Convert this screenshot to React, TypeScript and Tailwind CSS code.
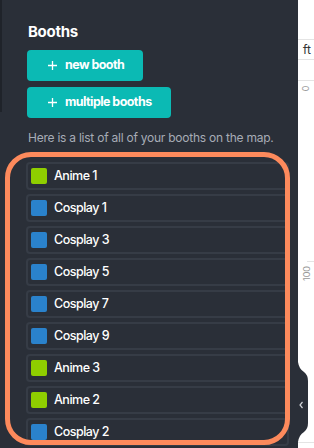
const booths = [
  { name: "Anime 1", color: "bg-[#8fce00]" },
  { name: "Cosplay 1", color: "bg-[#2a82cc]" },
  { name: "Cosplay 3", color: "bg-[#2a82cc]" },
  { name: "Cosplay 5", color: "bg-[#2a82cc]" },
  { name: "Cosplay 7", color: "bg-[#2a82cc]" },
  { name: "Cosplay 9", color: "bg-[#2a82cc]" },
  { name: "Anime 3", color: "bg-[#8fce00]" },
  { name: "Anime 2", color: "bg-[#8fce00]" },
  { name: "Cosplay 2", color: "bg-[#2a82cc]" },
];

function PlusButton({ label }: { label: string }) {
  return (
    <button className="ml-px h-[31px] self-start rounded-[4px] bg-[#0bbab4] pl-[21px] pr-[19px] flex items-center gap-[8px] text-white text-[12.5px] font-bold tracking-[-0.045em]">
      <svg width="9" height="9" viewBox="0 0 9 9" className="shrink-0">
        <path d="M4.5 0v9M0 4.5h9" stroke="white" strokeWidth="1.3" />
      </svg>
      <span>{label}</span>
    </button>
  );
}

export default function App() {
  return (
    <div
      className="relative w-[314px] h-[448px] overflow-hidden flex bg-white"
      style={{ fontFamily: "Inter, 'Noto Sans', sans-serif" }}
    >
      {/* Sidebar */}
      <aside className="relative w-[298px] h-full shrink-0 bg-[#2a2f38] flex flex-col pt-[22px] pl-[26px] overflow-hidden">
        <div className="absolute left-0 top-0 w-[2px] h-[112px] bg-[#1f232a]"></div>
        <h2 className="ml-[2px] text-white text-[15px] font-bold leading-[20px] tracking-[-0.02em]">Booths</h2>
        <div className="mt-[8px] flex flex-col gap-[6px]">
          <PlusButton label="new booth" />
          <PlusButton label="multiple booths" />
        </div>
        <p className="ml-[2px] mt-[12px] text-[12px] leading-[16px] text-[#a7acb6] tracking-[-0.02em]">
          Here is a list of all of your booths on the map.
        </p>
        <ul className="mt-[16px] w-[263px] flex flex-col gap-[4px]">
          {booths.map((b) => (
            <li
              key={b.name}
              className="h-[28px] shrink-0 rounded-[4px] border-2 border-[#363c46] flex items-center pl-[3px] gap-[7px]"
            >
              <span className={`w-[16px] h-[16px] rounded-[2px] ${b.color}`}></span>
              <span className="text-white text-[12.5px] font-medium tracking-[-0.04em]">{b.name}</span>
            </li>
          ))}
        </ul>
      </aside>

      {/* Ruler */}
      <div className="flex-1 h-full bg-white flex flex-col">
        <div className="h-[40px] shrink-0 border-b border-[#e4e4e4]"></div>
        <div className="h-[20px] shrink-0 border-b border-[#e4e4e4] pl-[5px] flex items-center text-[12px] text-[#333] leading-none">
          ft
        </div>
        <div className="h-[21px] shrink-0 border-b border-[#e4e4e4]"></div>
        <div className="relative flex-1 ml-[8px]">
          <span className="absolute left-[-3px] top-[3px] text-[9px] text-[#999] leading-none rotate-90">0</span>
          <span className="absolute left-[-7px] top-[188px] text-[9px] text-[#999] leading-none -rotate-90 origin-center">100</span>
          <div className="absolute left-[1px] right-0 top-[180px] h-px bg-[#e4e4e4]"></div>
        </div>
        <div className="h-[6px] shrink-0 border-t border-[#e4e4e4]"></div>
      </div>

      {/* Collapse tab */}
      <svg className="absolute left-[297px] top-[362px]" width="14" height="80" viewBox="0 0 14 80">
        <path d="M0 0 H1 Q2 7 7 10 Q11 13 11 19 V61 Q11 67 7 70 Q2 73 1 80 H0 Z" fill="#2a2f38" />
        <path d="M5.5 40 L3 43 L5.5 46" stroke="#d0d3d8" strokeWidth="1.2" fill="none" />
      </svg>

      {/* Highlight annotation */}
      <div className="absolute left-[5px] top-[152px] w-[285px] h-[293px] rounded-[26px] border-[5px] border-[#fd8a5c] pointer-events-none"></div>
    </div>
  );
}
